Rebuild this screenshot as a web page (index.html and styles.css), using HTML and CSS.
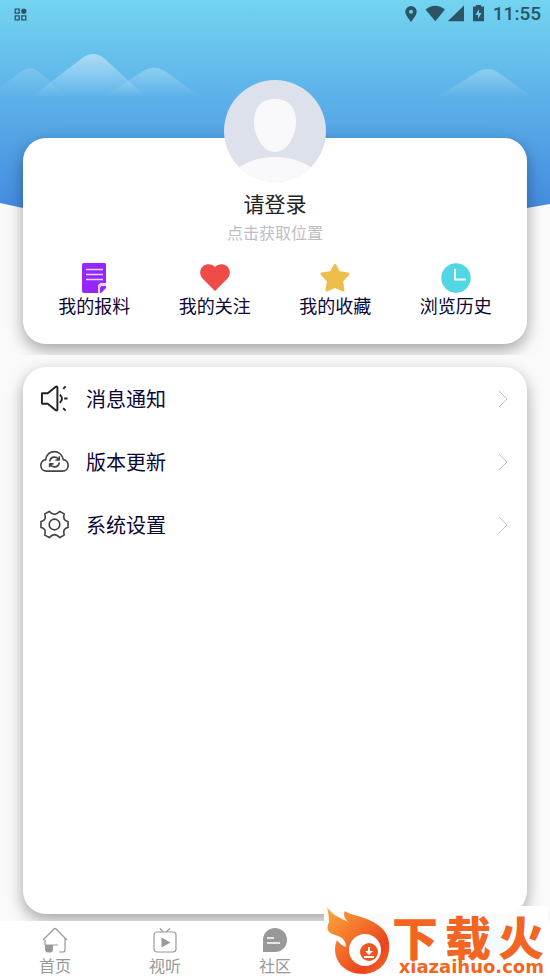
FILE: index.html
```html
<!DOCTYPE html>
<html lang="zh-CN">
<head>
<meta charset="utf-8">
<meta name="viewport" content="width=device-width, initial-scale=1">
<title>我的</title>
<link rel="stylesheet" href="styles.css">
</head>
<body>
<svg class="sky" viewBox="0 0 550 210" preserveAspectRatio="none" aria-hidden="true">
  <defs>
    <linearGradient id="sky" x1="0" y1="0" x2="0" y2="1">
      <stop offset="0" stop-color="#73d4f0"/><stop offset=".45" stop-color="#5db2e9"/><stop offset="1" stop-color="#448ae0"/>
    </linearGradient>
    <linearGradient id="peak" x1="0" y1="0" x2="0" y2="1">
      <stop offset="0" stop-color="#fff" stop-opacity=".45"/><stop offset="1" stop-color="#fff" stop-opacity="0"/>
    </linearGradient>
    <linearGradient id="hill" x1="0" y1="0" x2="0" y2="1">
      <stop offset="0" stop-color="#fff" stop-opacity=".27"/><stop offset="1" stop-color="#fff" stop-opacity="0"/>
    </linearGradient>
    <linearGradient id="far" x1="0" y1="0" x2="0" y2="1">
      <stop offset="0" stop-color="#fff" stop-opacity=".15"/><stop offset="1" stop-color="#fff" stop-opacity="0"/>
    </linearGradient>
  </defs>
  <path fill="url(#sky)" d="M0 0H550V204L527 208Q275 212 23 208L0 203Z"/>
  <path fill="url(#far)" d="M-10 95L22 71Q30 65 38 71L68 97H-10Z"/>
  <path fill="url(#peak)" d="M30 98L81 59Q93 49 105 59L147 98Z"/>
  <path fill="url(#hill)" d="M104 97L143 71Q154 64 165 71L201 97Z"/>
  <path fill="url(#hill)" d="M435 98L479 71Q488 67 496 71L534 98Z"/>
</svg>

<header class="status">
  <svg width="13" height="13" viewBox="0 0 13 13" fill="none" stroke="#2b5564" stroke-width="1.3" aria-hidden="true">
    <path d="M1.2 1.2h4v4h-4zM1.2 7.8h4v4h-4zM7.8 7.8h4v4h-4z"/><circle cx="9.8" cy="3.2" r="2" fill="#2b5564"/>
  </svg>
  <div class="status-right">
    <svg width="80" height="18" viewBox="0 0 80 18" fill="#2b5564" aria-hidden="true">
      <path fill-rule="evenodd" d="M6 1a5.800 5.800 0 0 1 5.800 5.800C11.800 10 6 17 6 17S.2 10 .2 6.800A5.800 5.800 0 0 1 6 1zm0 3.800a2 2 0 1 0 0 4 2 2 0 0 0 0-4z"/>
      <path d="M20.500 4.500C26 -.6 34.500 -.6 40 4.500L30.300 16.300z"/>
      <path d="M59 .4V16.300H42.700z"/>
      <path fill-rule="evenodd" d="M71 0h5v1.500h3V16.300H68V1.500h3zM74 4l-3.500 6H73v4l3.500-6H74z"/>
    </svg>
    <time>11:55</time>
  </div>
</header>

<main>
  <section class="profile-area">
    <div class="card profile">
      <svg class="avatar" viewBox="0 0 102 102" role="img" aria-label="头像">
        <defs><clipPath id="round"><circle cx="51" cy="51" r="51"/></clipPath></defs>
        <g clip-path="url(#round)">
          <path fill="#dde1ec" d="M0 0h102v102H0z"/>
          <path fill="#f9f9fc" d="M51 19C65 19 72 28 72 42C72 56 63 72 51 72S30 56 30 42C30 28 37 19 51 19z"/>
          <path fill="#f9f9fc" d="M11 90C24 81 36 77 51 77S79 81 91 90V102H11z"/>
        </g>
      </svg>
      <button class="login">请登录</button>
      <button class="locate">点击获取位置</button>
      <nav class="shortcuts" aria-label="我的内容">
        <a href="#reports">
          <svg viewBox="0 0 30 30" aria-hidden="true"><path fill="#9527fc" d="M5 0H26Q27 0 27 2V20H23Q19 20 19 24V30H5Q3 30 3 28V2Q3 0 5 0zM27 23V25L22 30H21V25Q21 23 23 23z"/><path stroke="#e8d2ff" stroke-width="1.400" d="M7 6.500H24M7 11.500H24M7 16.500H24"/><path fill="none" stroke="#e1c4ff" stroke-width="1.500" d="M20 30V25Q20 21.500 23 21.500H27"/></svg>
          我的报料</a>
        <a href="#following">
          <svg viewBox="0 0 30 30" aria-hidden="true"><path fill="#ee4b49" d="M15 28L3 16C-1 12-.5 6 3 3.200C7 0 12 1 15 4C18 1 23 0 27 3.200C30.500 6 31 12 27 16z"/></svg>
          我的关注</a>
        <a href="#favorites">
          <svg viewBox="0 0 30 30" aria-hidden="true"><path fill="#edbe49" stroke="#edbe49" stroke-width="3" stroke-linejoin="round" d="M15 2.500L18.500 9.500L28 11L21.500 18L23 27L15 23.500L7 27L8.500 18L2 11L11.500 9.500z"/></svg>
          我的收藏</a>
        <a href="#history">
          <svg viewBox="0 0 30 30" aria-hidden="true"><circle cx="15" cy="15" r="14.700" fill="#51d7e3"/><path fill="none" stroke="#fff" stroke-width="2" d="M14 6V16.500H25"/></svg>
          浏览历史</a>
      </nav>
    </div>
  </section>

  <section class="menu-area">
    <nav class="card menu" aria-label="设置">
      <a href="#messages">
        <svg class="glyph" viewBox="0 0 30 30" aria-hidden="true"><path d="M2.500 9.500H8L16 3Q18 2 18 4V26Q18 28 16 27L8 20.500H2.500Q2 20.500 2 20V10Q2 9.500 2.500 9.500zM20.500 11Q25 15 20.500 19.500M24 5L26.500 2.500M25 15H28.500M24 25L26.500 27.500"/></svg>
        <span>消息通知</span>
        <svg class="chevron" viewBox="0 0 10 18" aria-hidden="true"><path d="M1 1L9 9L1 17"/></svg>
      </a>
      <a href="#update">
        <svg class="glyph thin" viewBox="0 0 30 30" aria-hidden="true"><path d="M7 25C-1 25-1 14 6 13C7 2 22 2 24 13C31 14 31 25 23 25zM10 15Q11 10 15.500 10.500Q18 10.500 19.500 13M20 9.500V13.500H16M20 16Q19 21 14.500 20.500Q12 20.500 10.500 18M10 21V17.500H14"/></svg>
        <span>版本更新</span>
        <svg class="chevron" viewBox="0 0 10 18" aria-hidden="true"><path d="M1 1L9 9L1 17"/></svg>
      </a>
      <a href="#settings">
        <svg class="glyph thin" viewBox="0 0 30 30" aria-hidden="true"><path d="M9.500 1.500C11 3 12.500 4.500 15 4.500S19 3 20.500 1.500L25 4C24 8 24.500 11 29 12V18C24.500 19 24 22 25 26L20.500 28.500C19 27 17.500 25.500 15 25.500S11 27 9.500 28.500L5 26C6 22 5.500 19 1 18V12C5.500 11 6 8 5 4z"/><circle cx="15" cy="15" r="5.500"/></svg>
        <span>系统设置</span>
        <svg class="chevron" viewBox="0 0 10 18" aria-hidden="true"><path d="M1 1L9 9L1 17"/></svg>
      </a>
    </nav>
  </section>
</main>

<nav class="tabs" aria-label="主导航">
  <a href="#home"><svg viewBox="0 0 26 26" aria-hidden="true"><path d="M1 13L12 2Q13 1 14 2L25 13M3 13V18M23 11.500V23Q23 25 21 25H17M3 18H16"/><path fill="#999" stroke="none" d="M3 18H11V22Q11 25.500 8 25.500H6Q3 25.500 3 22z"/></svg>首页</a>
  <a href="#video"><svg viewBox="0 0 26 26" aria-hidden="true"><rect x="2" y="5" width="22" height="20" rx="3"/><path d="M8 1.500L11 5M18 1.500L14 5"/><path fill="#999" stroke="none" d="M9.500 10.500L18.500 15.500L9.500 20.500z"/></svg>视听</a>
  <a href="#community"><svg viewBox="0 0 26 26" aria-hidden="true"><path fill="#999" stroke="none" d="M1 25V13A12 12 0 1 1 13 25z"/><path class="lines" d="M5 11H12M5 16H18"/></svg>社区</a>
  <a href="#service"><svg viewBox="0 0 26 26" aria-hidden="true"><path fill="#999" stroke="none" d="M7 1H19L25 12L19 23H7L1 12z"/></svg>服务</a>
  <a href="#me" class="current"><svg viewBox="0 0 26 26" aria-hidden="true"><path fill="#2caee5" stroke="none" d="M6 2H20V12H26V25H1V18Q6 16 6 10z"/></svg>我的</a>
</nav>

<aside class="brand">
  <svg class="flame" viewBox="0 0 66 70" aria-hidden="true">
    <defs><linearGradient id="fire" x1="0" y1="0" x2="1" y2="1"><stop offset="0" stop-color="#faaa3d"/><stop offset=".35" stop-color="#f57b2d"/><stop offset=".75" stop-color="#ec431e"/><stop offset="1" stop-color="#f47a29"/></linearGradient></defs>
    <path fill="url(#fire)" d="M1 1C6 9 13 11 22 16C18 12 17 8 19 5C25 10 40 10 52 19C61 25 64 34 63 44C62 59 50 68 37 68C20 68 9 57 9 43Q9 38 11 34Q14 39 20 41C20 34 16 31 9 29C1 27 0 22 3 16C3 10 2 6 1 1z"/>
    <circle cx="39" cy="44" r="16" fill="#fff"/>
    <circle cx="43" cy="46" r="9" fill="#ef5423"/>
    <path stroke="#fff" stroke-width="2" fill="none" d="M43 41V47M38 51H48"/><path fill="#fff" d="M39 45H47L43 49z"/>
  </svg>
  <div class="brand-text">
    <strong><b>下</b><b>载</b><b>火</b></strong>
    <span>xiazaihuo.com</span>
  </div>
</aside>
</body>
</html>
```

FILE: styles.css
```css
* {
  box-sizing: border-box;
}

body {
  position: relative;
  display: flex;
  flex-direction: column;
  min-height: 100vh;
  margin: 0;
  background: #fafafa;
  color: #0b0633;
  font-family: "Noto Sans CJK SC", sans-serif;
  overflow-x: hidden;
}

a {
  color: inherit;
  text-decoration: none;
}

button {
  padding: 0;
  border: 0;
  background: none;
  font-family: inherit;
}

svg {
  display: block;
  flex: none;
}

.sky {
  position: absolute;
  top: 0;
  left: 0;
  z-index: -1;
  width: 100%;
  height: 210px;
}

.status {
  display: flex;
  align-items: center;
  justify-content: space-between;
  height: 28px;
  padding: 0 9px 0 14px;
  color: #2b5564;
}

.status-right {
  display: flex;
  align-items: center;
  gap: 8px;
  font: 500 19px/28px Roboto, sans-serif;
}

main {
  display: flex;
  flex: 1;
  flex-direction: column;
}

.card {
  border-radius: 23px;
  background: #fff;
  box-shadow: 0 6px 16px rgba(0, 0, 0, 0.35);
}

.profile-area {
  padding: 110px 23px 11px;
  overflow: hidden;
}

.profile {
  display: flex;
  flex-direction: column;
  align-items: center;
  padding-bottom: 24px;
}

.avatar {
  width: 102px;
  height: 102px;
  margin-top: -58px;
}

.login {
  margin-top: 7px;
  color: #222;
  font-size: 21px;
  line-height: 28px;
}

.locate {
  color: #bdbdc6;
  font-size: 16px;
  line-height: 30px;
}

.shortcuts {
  display: grid;
  grid-template-columns: repeat(4, 1fr);
  align-self: stretch;
  margin-top: 16px;
  padding: 0 11px;
}

.shortcuts a {
  display: flex;
  flex-direction: column;
  align-items: center;
  padding-bottom: 2px;
  font-size: 18px;
  line-height: 25px;
}

.shortcuts svg {
  width: 30px;
  height: 30px;
}

.menu-area {
  display: flex;
  flex: 1;
  flex-direction: column;
  padding: 12px 23px 7px;
  overflow: hidden;
}

.menu {
  flex: 1;
}

.menu a {
  display: flex;
  align-items: center;
  gap: 17px;
  height: 63px;
  padding: 0 19px 0 17px;
  font-size: 20px;
}

.menu span {
  flex: 1;
}

.glyph {
  width: 29px;
  height: 29px;
  fill: none;
  stroke: #222;
  stroke-width: 2;
  stroke-linejoin: round;
}

.thin {
  stroke: #444;
  stroke-width: 1.7;
}

.chevron {
  width: 10px;
  height: 18px;
  fill: none;
  stroke: #c4c4c4;
  stroke-width: 1;
}

.tabs {
  display: grid;
  grid-template-columns: repeat(5, 1fr);
  height: 57px;
  padding-top: 6px;
  background: #fff;
}

.tabs a {
  display: flex;
  flex-direction: column;
  align-items: center;
  color: #999;
  font-size: 16px;
  line-height: 25px;
}

.tabs .current {
  color: #2caee5;
}

.tabs svg {
  width: 26px;
  height: 26px;
  fill: none;
  stroke: #999;
  stroke-width: 1.2;
}

.tabs .lines {
  stroke: #fff;
  stroke-width: 1.5;
}

.brand {
  position: absolute;
  right: 2px;
  bottom: 0;
  display: flex;
  width: 224px;
  height: 72px;
  padding-left: 2px;
  background: rgba(255, 255, 255, 0.94);
  color: #f26522;
}

.flame {
  width: 66px;
  height: 70px;
}

.brand-text {
  display: flex;
  flex: 1;
  flex-direction: column;
  align-items: flex-end;
  justify-content: flex-end;
  padding: 0 4px 2px 0;
  white-space: nowrap;
}

.brand-text strong {
  display: flex;
  align-self: stretch;
  justify-content: space-between;
  font-size: 46px;
  line-height: 46px;
}

.brand-text b {
  font-weight: 900;
}

.brand-text span {
  font: bold 18px/18px "DejaVu Sans", sans-serif;
}
```
